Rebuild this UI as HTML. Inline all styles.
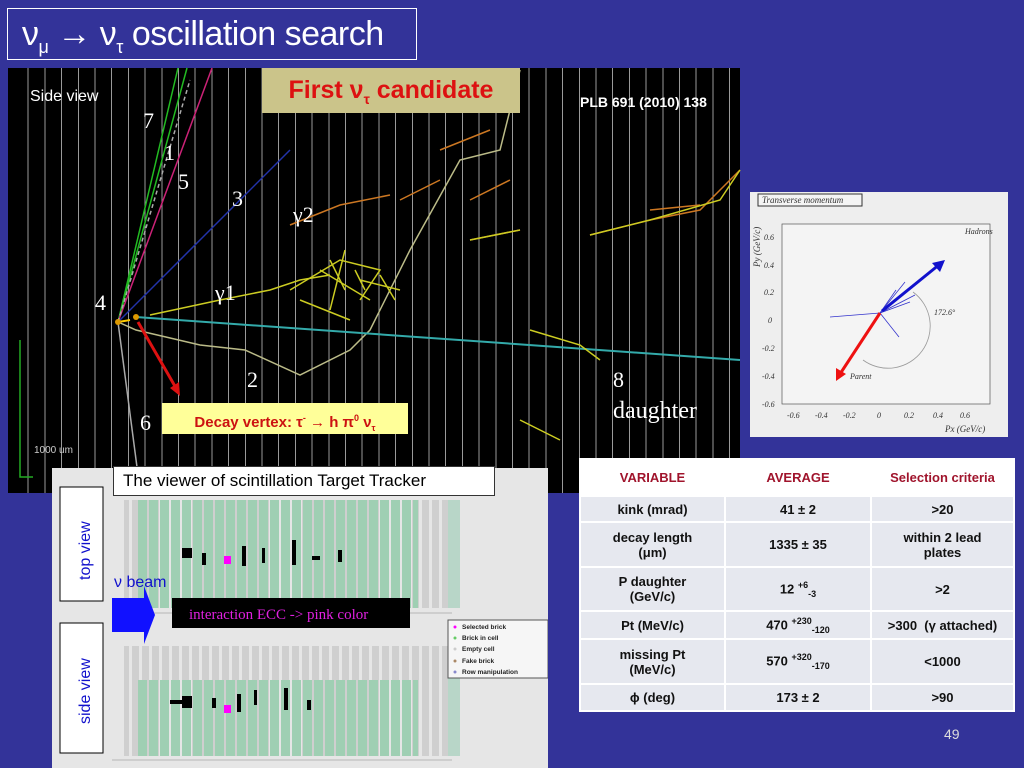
<!DOCTYPE html>
<html><head><meta charset="utf-8"><style>
body{margin:0;width:1024px;height:768px;background:#333399;position:relative;overflow:hidden;font-family:"Liberation Sans",sans-serif}
.abs{position:absolute}
#title{left:7px;top:8px;width:410px;height:52px;border:1px solid #fff;color:#fff;font-size:34px;line-height:50px;padding-left:14px;box-sizing:border-box;font-family:"Liberation Sans",sans-serif;letter-spacing:-0.5px}
#img{left:8px;top:68px;width:732px;height:425px;background:#000 repeating-linear-gradient(90deg,transparent 0,transparent 15.7px,#9a9a9a 15.7px,#9a9a9a 16.7px);background-position:4px 0}
table{border-collapse:collapse;font-weight:bold;font-size:13px;text-align:center}
td{border:2px solid #fff;background:#e6e8ef;color:#111;padding:0}
sup,sub{font-size:9px}
</style></head><body>
<div id="title" class="abs">ν<sub style="font-size:18px">μ</sub> → ν<sub style="font-size:18px">τ</sub> oscillation search</div>
<div id="img" class="abs"></div>
<svg class="abs" style="left:0;top:0" width="1024" height="768">
<g fill="none" stroke-width="1.5">
<line x1="118" y1="322" x2="178" y2="68" stroke="#22bb22"/>
<line x1="118" y1="322" x2="187" y2="68" stroke="#22bb22"/>
<line x1="118" y1="322" x2="212" y2="68" stroke="#cc2277"/>
<line x1="118" y1="322" x2="190" y2="80" stroke="#aaaaaa" stroke-dasharray="4 3"/>
<line x1="118" y1="322" x2="290" y2="150" stroke="#2233aa"/>
<polyline points="118,322 136,330 200,345 245,350 300,375 350,350 370,330 410,250 460,160 500,150 520,70" stroke="#bbbb88"/>
<line x1="136" y1="317" x2="740" y2="360" stroke="#33aaaa" stroke-width="2"/>
<line x1="118" y1="322" x2="140" y2="490" stroke="#aaaaaa"/>
<polyline points="150,315 220,300 270,290 300,280 330,275" stroke="#cccc22"/>
<path d="M290,290 L340,260 L380,270 L360,300 M320,270 L370,300 M300,300 L350,320 M330,260 L345,290 M345,250 L330,310 M355,270 L365,290 M380,275 L395,300 M360,280 L400,290" stroke="#cccc22"/>
<path d="M290,225 L340,205 L390,195 M400,200 L440,180 M440,150 L490,130 M470,200 L510,180 M470,240 L520,230 M590,235 L650,220 L700,210 L740,170 M650,210 L700,205" stroke="#cc7722"/>
<path d="M590,235 L650,220 L720,200 L740,170 M470,240 L520,230 M520,420 L560,440 M530,330 L580,345 L600,360" stroke="#cccc22"/>
<line x1="118" y1="322" x2="130" y2="320" stroke="#ffcc00" stroke-width="2"/>
<circle cx="118" cy="322" r="3" fill="#dd9900"/><circle cx="136" cy="317" r="3" fill="#dd9900"/>
<line x1="138" y1="322" x2="176" y2="388" stroke="#dd1111" stroke-width="3"/>
<polygon points="170,388 180,396 179,382" fill="#dd1111"/>
<polyline points="20,340 20,477 33,477" stroke="#22aa22"/>
</g>
<g fill="#fff" font-family="Liberation Serif,serif" font-size="22">
<text x="143" y="128">7</text><text x="164" y="160">1</text><text x="178" y="189">5</text><text x="232" y="206">3</text>
<text x="293" y="222">γ2</text><text x="215" y="300">γ1</text><text x="95" y="310">4</text><text x="247" y="387">2</text>
<text x="140" y="430">6</text><text x="613" y="387">8</text><text x="613" y="418" font-size="24">daughter</text>
</g>
<text x="30" y="101" fill="#fff" font-size="16">Side view</text>
<text x="580" y="107" fill="#fff" font-size="14" font-weight="bold">PLB 691 (2010) 138</text>
<text x="34" y="453" fill="#ccc" font-size="10">1000 um</text>
</svg>
<div class="abs" style="left:262px;top:68px;width:258px;height:45px;background:#cbc48a;color:#dd1111;font-weight:bold;font-size:25px;line-height:45px;text-align:center">First ν<sub style="font-size:14px">τ</sub> candidate</div>
<div class="abs" style="left:162px;top:403px;width:246px;height:31px;background:#ffff99;color:#cc1111;font-weight:bold;font-size:15px;line-height:31px;text-align:center">Decay vertex: τ<sup>-</sup> → h π<sup>0</sup> ν<sub>τ</sub></div>
<div class="abs" style="left:750px;top:192px;width:258px;height:245px;background:#eeeeee"></div>
<svg class="abs" style="left:750px;top:192px" width="258" height="245" font-family="Liberation Serif,serif" font-style="italic" font-size="8" fill="#333">
<rect x="8" y="2" width="104" height="12" fill="#f4f4f4" stroke="#333"/>
<text x="12" y="11" font-size="9">Transverse momentum</text>
<rect x="32" y="32" width="208" height="180" fill="#f4f4f4" stroke="#555" stroke-width="0.7"/>
<text x="14" y="48">0.6</text><text x="14" y="76">0.4</text><text x="14" y="103">0.2</text><text x="18" y="131">0</text><text x="12" y="159">-0.2</text><text x="12" y="187">-0.4</text><text x="12" y="215">-0.6</text>
<text x="37" y="226">-0.6</text><text x="65" y="226">-0.4</text><text x="93" y="226">-0.2</text><text x="127" y="226">0</text><text x="154" y="226">0.2</text><text x="183" y="226">0.4</text><text x="210" y="226">0.6</text>
<text x="195" y="240" font-size="9">Px (GeV/c)</text>
<text x="10" y="75" font-size="9" transform="rotate(-90 10 75)">Py (GeV/c)</text>
<text x="215" y="42">Hadrons</text><text x="100" y="187">Parent</text><text x="184" y="123">172.6°</text>
<path d="M163,100 A40,40 0 1,1 113,168" fill="none" stroke="#999" stroke-width="0.8"/>
<g stroke="#33c" stroke-width="0.8" fill="none"><line x1="130" y1="121" x2="80" y2="125"/><line x1="130" y1="121" x2="149" y2="145"/><line x1="130" y1="121" x2="155" y2="90"/><line x1="130" y1="121" x2="165" y2="103"/><line x1="130" y1="121" x2="160" y2="110"/><line x1="130" y1="121" x2="146" y2="98"/></g>
<line x1="132" y1="119" x2="190" y2="72" stroke="#11c" stroke-width="3"/><polygon points="195,68 182,71 190,80" fill="#11c"/>
<line x1="130" y1="121" x2="90" y2="182" stroke="#e11" stroke-width="3"/><polygon points="86,189 86,176 96,182" fill="#e11"/>
</svg>
<div class="abs" style="left:52px;top:468px;width:496px;height:300px;background:#e6e6e6"></div>
<svg class="abs" style="left:52px;top:468px" width="496" height="300">
<defs><pattern id="g" x="86" y="0" width="11" height="300" patternUnits="userSpaceOnUse"><rect x="0" y="0" width="9" height="300" fill="#9fcfb3"/></pattern>
<pattern id="h" x="0" y="0" width="10" height="300" patternUnits="userSpaceOnUse"><rect x="0" y="0" width="7" height="300" fill="#cfcfcf"/></pattern></defs>
<rect x="72" y="32" width="330" height="108" fill="url(#h)"/>
<rect x="86" y="32" width="280" height="108" fill="url(#g)"/>
<rect x="72" y="178" width="330" height="110" fill="url(#h)"/>
<rect x="86" y="212" width="280" height="76" fill="url(#g)"/>
<rect x="86" y="222" width="22" height="66" fill="url(#g)"/>
<rect x="396" y="32" width="12" height="108" fill="#b8d6c8"/><rect x="396" y="178" width="12" height="110" fill="#b8d6c8"/>
<line x1="60" y1="145" x2="400" y2="145" stroke="#888" stroke-width="0.6"/><line x1="60" y1="292" x2="400" y2="292" stroke="#888" stroke-width="0.6"/>
<g fill="#000"><rect x="130" y="80" width="10" height="10"/><rect x="150" y="85" width="4" height="12"/><rect x="190" y="78" width="4" height="20"/><rect x="210" y="80" width="3" height="15"/><rect x="240" y="72" width="4" height="25"/><rect x="260" y="88" width="8" height="4"/><rect x="286" y="82" width="4" height="12"/><rect x="130" y="228" width="10" height="12"/><rect x="118" y="232" width="12" height="4"/><rect x="160" y="230" width="4" height="10"/><rect x="185" y="226" width="4" height="18"/><rect x="202" y="222" width="3" height="15"/><rect x="232" y="220" width="4" height="22"/><rect x="255" y="232" width="4" height="10"/></g>
<rect x="172" y="88" width="7" height="8" fill="#f0f"/><rect x="172" y="237" width="7" height="8" fill="#f0f"/>
<rect x="8" y="19" width="43" height="114" fill="#fff" stroke="#000"/>
<text transform="translate(38 112) rotate(-90)" fill="#11c" font-size="16">top view</text>
<rect x="8" y="155" width="43" height="130" fill="#fff" stroke="#000"/>
<text transform="translate(38 256) rotate(-90)" fill="#11c" font-size="16">side view</text>
<text x="62" y="119" fill="#11c" font-size="16">ν beam</text>
<polygon points="60,130 92,130 92,118 103,147 92,176 92,164 60,164" fill="#11f"/>
<rect x="120" y="130" width="238" height="30" fill="#000"/>
<text x="137" y="151" fill="#e020e0" font-family="Liberation Serif,serif" font-size="15">interaction ECC -&gt; pink color</text>
<rect x="396" y="152" width="100" height="58" fill="#f6f6f6" stroke="#555"/>
<g font-size="6.5" font-weight="bold" fill="#222"><text x="410" y="161">Selected brick</text><text x="410" y="172">Brick in cell</text><text x="410" y="183">Empty cell</text><text x="410" y="195">Fake brick</text><text x="410" y="206">Row manipulation</text></g>
<g><circle cx="403" cy="159" r="1.5" fill="#f0f"/><circle cx="403" cy="170" r="1.5" fill="#6c6"/><circle cx="403" cy="181" r="1.5" fill="#ccc"/><circle cx="403" cy="193" r="1.5" fill="#a86"/><circle cx="403" cy="204" r="1.5" fill="#88c"/></g>
</svg>
<div class="abs" style="left:113px;top:466px;width:382px;height:30px;background:#fff;border:1px solid #333;box-sizing:border-box;font-size:17px;line-height:28px;padding-left:9px;color:#000">The viewer of scintillation Target Tracker</div>
<table class="abs" style="left:579px;top:458px;width:436px;height:252px">
<tr style="height:37px"><td style="width:143px;background:#fff;color:#a0142c">VARIABLE</td><td style="width:144px;background:#fff;color:#a0142c">AVERAGE</td><td style="background:#fff;color:#a0142c">Selection criteria</td></tr>
<tr style="height:26px"><td>kink (mrad)</td><td>41 ± 2</td><td>&gt;20</td></tr>
<tr style="height:45px"><td>decay length<br>(μm)</td><td>1335 ± 35</td><td>within 2 lead<br>plates</td></tr>
<tr style="height:44px"><td>P daughter<br>(GeV/c)</td><td>12 <sup>+6</sup><sub>-3</sub></td><td>&gt;2</td></tr>
<tr style="height:28px"><td>Pt (MeV/c)</td><td>470 <sup>+230</sup><sub>-120</sub></td><td>&gt;300 &nbsp;(γ attached)</td></tr>
<tr style="height:45px"><td>missing Pt<br>(MeV/c)</td><td>570 <sup>+320</sup><sub>-170</sub></td><td>&lt;1000</td></tr>
<tr style="height:27px"><td>ϕ (deg)</td><td>173 ± 2</td><td>&gt;90</td></tr>
</table>
<div class="abs" style="left:944px;top:726px;color:#ddd;font-size:14px">49</div>
</body></html>
